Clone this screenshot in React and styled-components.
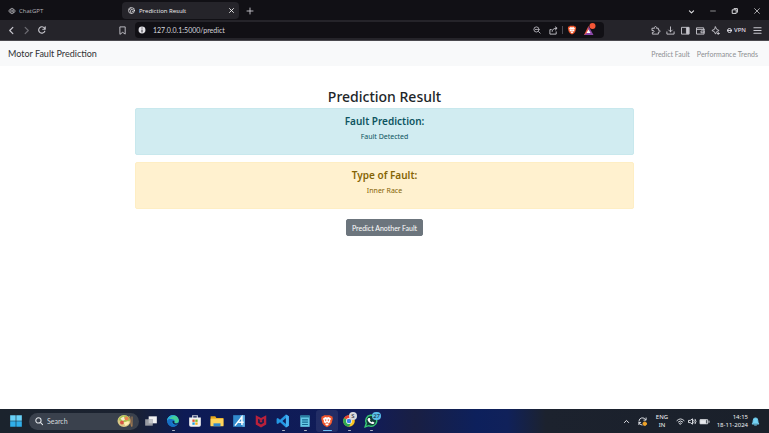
import React from "react";
import styled, { createGlobalStyle } from "styled-components";

const Global = createGlobalStyle`
  *, *::before, *::after { box-sizing: border-box; }
  body { margin: 0; background: #fff; font-family: "Noto Sans", "Open Sans", sans-serif; color: #212529; }
  button, input { font-family: inherit; }
  svg { display: block; flex: none; overflow: visible; }
`;

const Screen = styled.div`
  min-height: 100vh;
  display: flex;
  flex-direction: column;
`;

const TabStrip = styled.div`
  height: 20px;
  display: flex;
  align-items: stretch;
  background: #111015;
  padding: 2px 1px 0 6px;
`;
const Tab = styled.div`
  display: flex;
  align-items: center;
  gap: 4px;
  width: ${(p) => (p.$active ? 117 : 116)}px;
  height: 17px;
  padding: 0 4px 0 ${(p) => (p.$active ? 6 : 3)}px;
  border-radius: 4px;
  background: ${(p) => (p.$active ? "#25242a" : "transparent")};
  color: ${(p) => (p.$active ? "#f1f1f3" : "#b4b3b9")};
`;
const TabName = styled.span`
  flex: 1;
  font-family: "Open Sans", sans-serif;
  font-size: 6px;
  line-height: 10px;
  white-space: nowrap;
`;
const IconButton = styled.button`
  display: flex;
  align-items: center;
  justify-content: center;
  flex: none;
  width: ${(p) => p.$w || 15}px;
  border: 0;
  padding: 0;
  background: none;
  color: ${(p) => p.$color || "#c9c8cf"};
`;
const Spacer = styled.div`
  flex: 1;
`;

const Toolbar = styled.div`
  height: 21px;
  display: flex;
  align-items: center;
  background: #25242a;
  border-bottom: 1px solid #4a494e;
  padding: 0 4px;
`;
const NavGroup = styled.div`
  display: flex;
  width: 113px;
`;
const AddressBar = styled.div`
  flex: 1;
  display: flex;
  align-items: center;
  height: 16px;
  margin: 0 44px 0 8px;
  padding: 0 5px 0 3px;
  border-radius: 4px;
  background: #111015;
  color: #c9c8cf;
`;
const AddressInput = styled.input`
  flex: 1;
  min-width: 0;
  border: 0;
  padding: 0 0 0 7px;
  outline: 0;
  background: none;
  color: #d6d5dc;
  font-family: Lato, sans-serif;
  font-size: 7px;
  line-height: 12px;
`;
const Divider = styled.span`
  width: 1px;
  height: 8px;
  background: #4b4a52;
`;
const Vpn = styled.button`
  display: flex;
  align-items: center;
  justify-content: center;
  gap: 2px;
  width: 27px;
  border: 0;
  padding: 0;
  background: none;
  color: #e0dfe6;
  font-size: 6px;
  line-height: 10px;
  font-weight: 500;
`;

const Navbar = styled.nav`
  display: flex;
  align-items: center;
  justify-content: space-between;
  height: 25px;
  padding: 0 11px 0 8px;
  background: #f8f9fa;
`;
const Brand = styled.a`
  color: #303235;
  font-family: Lato, sans-serif;
  font-size: 9px;
  line-height: 14px;
  text-decoration: none;
`;
const NavLinks = styled.div`
  display: flex;
  gap: 7px;
`;
const NavLink = styled.a`
  color: #8d8f92;
  font-family: Lato, sans-serif;
  font-size: 7px;
  line-height: 12px;
  text-decoration: none;
`;

const Main = styled.main`
  flex: 1;
  width: 65%;
  margin: 0 auto;
  padding-top: 20px;
  display: flex;
  flex-direction: column;
  align-items: center;
  text-align: center;
`;
const Title = styled.h1`
  margin: 0 0 1px;
  font-size: 14px;
  line-height: 21px;
  font-weight: 500;
`;
const Alert = styled.section`
  width: 100%;
  height: 47px;
  margin-bottom: 7px;
  padding-top: 5px;
  border: 1px solid ${(p) => (p.$kind === "info" ? "#c8e8ed" : "#feeec4")};
  border-radius: 2px;
  background: ${(p) => (p.$kind === "info" ? "#d1ecf1" : "#fff1cf")};
  color: ${(p) => (p.$kind === "info" ? "#0c5460" : "#856404")};
`;
const AlertTitle = styled.h2`
  margin: 0 0 3px;
  font-size: 10px;
  line-height: 14px;
  font-weight: 600;
`;
const AlertText = styled.p`
  margin: 0;
  font-size: 7px;
  line-height: 11px;
`;
const Action = styled.button`
  height: 17px;
  margin-top: 3px;
  padding: 0 5px;
  border: 1px solid #6c757d;
  border-radius: 2px;
  background: #6c757d;
  color: #fff;
  font-family: Lato, sans-serif;
  font-size: 7px;
  line-height: 12px;
`;

const Taskbar = styled.footer`
  display: flex;
  align-items: center;
  height: 24px;
  padding: 0 6px 0 4px;
  background: linear-gradient(90deg, #1b232d 0%, #1b2231 17%, #0d1b55 24%, #111c59 48%, #191f43 54%, #0d205c 62%, #10215a 66%, #1c222e 71%, #1a202a 100%);
`;
const SearchBox = styled.label`
  display: flex;
  align-items: center;
  width: 110px;
  height: 17px;
  margin: 0 1px;
  padding: 0 5px 0 6px;
  border-radius: 9px;
  background: #3a414d;
  color: #e3e6ea;
`;
const SearchInput = styled.input`
  flex: 1;
  min-width: 0;
  border: 0;
  outline: 0;
  padding: 0 0 0 4px;
  background: none;
  color: #e3e6ea;
  font-family: Lato, sans-serif;
  font-size: 7px;
  line-height: 12px;
  &::placeholder { color: #d5d8dd; opacity: 1; }
`;
const AppButton = styled.button`
  display: flex;
  align-items: center;
  justify-content: center;
  position: relative;
  flex: none;
  width: ${(p) => p.$w || 22}px;
  height: 22px;
  padding: 0;
  border: 0;
  border-radius: 3px;
  background: ${(p) => (p.$state === "active" ? "#ffffff14" : "none")};
  &::after {
    content: "";
    position: absolute;
    bottom: 1px;
    height: 1px;
    border-radius: 1px;
    width: ${(p) => (p.$state === "active" ? 9 : p.$state === "open" ? 3 : 0)}px;
    background: ${(p) => (p.$state === "active" ? "#6ec0f5" : "#aeb3c4")};
  }
`;
const Badge = styled.span`
  position: absolute;
  top: 2px;
  right: ${(p) => (p.$blue ? 1 : 3)}px;
  min-width: 8px;
  height: 8px;
  padding: 0 1px;
  border-radius: 4px;
  background: ${(p) => (p.$blue ? "#58bdea" : "#d8d9dc")};
  color: #17202e;
  font-size: 6px;
  line-height: 8px;
`;
const TrayText = styled.div`
  width: ${(p) => p.$w}px;
  color: #f0f1f4;
  font-size: 6px;
  line-height: 8px;
  white-space: nowrap;
  text-align: ${(p) => p.$align};
`;

const Line = ({ size = 9, sw = 1, box = 10, children }) => (
  <svg width={size} height={size} viewBox={`0 0 ${box} ${box}`} fill="none" stroke="currentColor" strokeWidth={sw} strokeLinecap="round" strokeLinejoin="round" aria-hidden="true">
    {children}
  </svg>
);
const Art = ({ w = 14, children }) => (
  <svg width={w} height={w} viewBox="0 0 24 24" aria-hidden="true">{children}</svg>
);

const windowControls = [
  ["Search tabs", 21, <Line size={7} sw={1.6}><path d="M2 4l3 3 3-3" /></Line>],
  ["Minimize", 21, <Line size={6}><path d="M1 5h8" /></Line>],
  ["Restore", 23, <Line size={6} sw={1.6}><path d="M1 3h6v6H1zM3.500 1H9v6" /></Line>],
  ["Close window", 22, <Line size={6} sw={1.2}><path d="M1 1l8 8M9 1L1 9" /></Line>],
];

const extensionButtons = [
  ["Extensions", <Line><path d="M1.500 2.500H4a1.200 1.200 0 1 1 2 0h2.200v2.200a1.200 1.200 0 1 1 0 2V9H1.500V7a1.200 1.200 0 1 0 0-2z" /></Line>],
  ["Downloads", <Line><path d="M5 1v5.500M3 4.500l2 2 2-2M1 6.500V9h8V6.500" /></Line>],
  ["Sidebar", <Line><path d="M1 1.500h8v7.500H1z" /><path d="M6.500 2h2v6.500h-2z" fill="currentColor" /></Line>],
  ["Wallet", <Line><path d="M1 2h7.500v1.500H9V9H1zM1 3.800h8M6 5.500h3v2H6z" /></Line>],
  ["Leo AI", <Line><path d="M5 1l1.300 2.700L9 5 6.300 6.300 5 9 3.700 6.300 1 5l2.700-1.300zM8 7v2.500M7 8.300h2.400" /></Line>],
];

const BraveLion = ({ w }) => (
  <Art w={w}>
    <path d="M7 2h10l2 2 2-.3 1 4-2 8-3 4-5 3-5-3-3-4-2-8 1-4L5 4z" fill="#f1562b" />
    <path d="M12 6l3-1 4 3-2 4 1 2-4 2 1 2-3 2-3-2 1-2-4-2 1-2-2-4 4-3z" fill="#fff" />
    <path d="M8 9l3 1-1 3zM16 9l-3 1 1 3zM12 14l2 1-2 2-2-2z" fill="#f1562b" />
  </Art>
);

const apps = [
  ["Task view", "", <Art><path d="M8 4h14v12H8z" fill="#f2f2f2" /><path d="M2 9h13v11H2z" fill="#989ba2" /><path d="M8 9h7v7H8z" fill="#c2c4c8" /></Art>],
  ["Edge", "open", <Art><circle cx="12" cy="12" r="10" fill="#1687d3" /><path d="M2 12C2 0 20-1 22 10c1 6-6 7-8 5 2-2 1-6-3-6-4-1-8 1-9 3z" fill="#42ce9b" /><path d="M2 12C2 3 12 0 18 4c-6-2-12 2-12 6z" fill="#2aa9e0" /><path d="M2 11c3-4 9-3 10 0-5 2-3 9 7 8-3 3-7 4-11 2-4-2-6-5-6-10z" fill="#1770c6" /><path d="M12 11c-2 2-1 6 3 7 3 1 6-1 6-3-3 2-6 1-7 0 1-1 1-3-2-4z" fill="#10224e" /></Art>],
  ["Store", "", <Art><path d="M8 7V3h8v4" fill="none" stroke="#d0d5dc" strokeWidth="2" /><path d="M2 6h20v13q0 3-3 3H5q-3 0-3-3z" fill="#f3f3f1" /><path d="M7.500 9.500h4v4h-4z" fill="#e3532d" /><path d="M12.500 9.500h4v4h-4z" fill="#79b82a" /><path d="M7.500 14.500h4v4h-4z" fill="#20a0df" /><path d="M12.500 14.500h4v4h-4z" fill="#f7b51b" /></Art>],
  ["File Explorer", "", <Art><path d="M1 4h8l2 3h12v13H1z" fill="#e6a61c" /><path d="M1 8h22v13H1z" fill="#ffd45c" /><path d="M6 16h12v5H6z" fill="#2f87cf" /></Art>],
  ["Design tool", "", <Art><path d="M2 2h20v20H2z" fill="#3189cd" /><path d="M14 2h8v20h-4z" fill="#62afe2" /><path d="M5 20L17 5v14M11 14h9" fill="none" stroke="#fff" strokeWidth="2.500" /></Art>],
  ["McAfee", "", <Art><path d="M3 2l9 5 9-5v16l-9 5-9-5z" fill="#b9213b" /><path d="M7 8l5 3 5-3v7l-5 3-5-3z" fill="#182052" /><path d="M10 10l2 1 2-1v4h-4z" fill="#b9213b" /></Art>],
  ["Visual Studio Code", "open", <Art><path d="M17 1l5 3v16l-5 3L7 14l-4 3-2-1V8l2-1 4 3zM17 7l-6 5 6 5z" fill="#2497e3" fillRule="evenodd" /><path d="M17 1l5 3v16l-5 3z" fill="#45aef0" /></Art>],
  ["Notepad", "open", <Art><path d="M4 3h16v19H4z" fill="#65c9e6" /><path d="M4 2h16v4H4z" fill="#297c9f" /><path d="M7 10h10M7 14h10M7 18h10" stroke="#176990" strokeWidth="2" /></Art>],
  ["Brave", "active", <BraveLion w={14} />],
  ["Chrome", "open", <><Art><circle cx="12" cy="12" r="10" fill="#f9c525" /><path d="M12 12L3.300 7a10 10 0 0 1 17.400 0z" fill="#e64235" /><path d="M3.300 7A10 10 0 0 0 12 22l4-8-4-2z" fill="#2faa52" /><circle cx="12" cy="12" r="5" fill="#fff" /><circle cx="12" cy="12" r="4" fill="#3b7fe8" /></Art><Badge>S</Badge></>],
  ["WhatsApp", "open", <><Art><path d="M2 22l2-6a9.500 9.500 0 1 1 4 4z" fill="#113d39" stroke="#38c776" strokeWidth="2.500" /><path d="M8 7l2 0 1 3-1 1q1 2 3 3l2-1 3 2q-1 3-4 2-6-1-8-7 0-2 2-3z" fill="#fff" /></Art><Badge $blue>27</Badge></>],
];

export default function App() {
  return (
    <Screen>
      <Global />
      <TabStrip>
        <Tab>
          <Line size={6}><circle cx="5" cy="5" r="1.500" /><path d="M5 1a2 2 0 0 1 3 2v4M8.500 3a2 2 0 0 1 0 4L5 9M8 7a2 2 0 0 1-3 2L2 7M5 9a2 2 0 0 1-3-2V3M1.500 7a2 2 0 0 1 0-4L5 1M2 3a2 2 0 0 1 3-2l3 2" /></Line>
          <TabName>ChatGPT</TabName>
        </Tab>
        <Tab $active>
          <Line size={7}><circle cx="5" cy="5" r="4.300" /><path d="M1.500 3.500L4 5l-.5 2L5 9M4 1.500l.5 2 2 .5L8 2.500M6 6.500l2.500-1" /></Line>
          <TabName>Prediction Result</TabName>
          <IconButton $w={8} $color="#eee" aria-label="Close tab"><Line size={5} sw={1.8}><path d="M1 1l8 8M9 1L1 9" /></Line></IconButton>
        </Tab>
        <IconButton $w={21} aria-label="New tab"><Line size={6} sw={1.5}><path d="M5 0v10M0 5h10" /></Line></IconButton>
        <Spacer />
        {windowControls.map(([label, w, icon]) => (
          <IconButton key={label} $w={w} $color="#e0e0e3" aria-label={label}>{icon}</IconButton>
        ))}
      </TabStrip>

      <Toolbar>
        <NavGroup>
          <IconButton aria-label="Back"><Line sw={1.3}><path d="M6.500 1.500L3 5l3.500 3.500" /></Line></IconButton>
          <IconButton $color="#6d6c73" aria-label="Forward"><Line sw={1.3}><path d="M3.500 1.500L7 5 3.500 8.500" /></Line></IconButton>
          <IconButton aria-label="Reload"><Line size={8} sw={1.4}><path d="M8.500 6.500A4 4 0 1 1 8 2.500L9 4M9 1v3H6" /></Line></IconButton>
        </NavGroup>
        <IconButton $w={10} aria-label="Bookmark"><Line><path d="M2.500 1h5.500v8L5.200 7 2.500 9z" /></Line></IconButton>
        <AddressBar>
          <svg width="8" height="8" viewBox="0 0 10 10" aria-hidden="true"><circle cx="5" cy="5" r="4.300" fill="#e4e3e8" /><path d="M5 2v1.200M5 4.500V8" stroke="#222128" strokeWidth="1.200" /></svg>
          <AddressInput aria-label="Address" defaultValue="127.0.0.1:5000/predict" />
          <IconButton $w={17} aria-label="Zoom"><Line size={8}><circle cx="4.300" cy="4.300" r="3.200" /><path d="M7 7l2 2M3 4.300h2.600" /></Line></IconButton>
          <IconButton $w={17} aria-label="Share"><Line><path d="M2.500 4H1v5h7V6.500M3.500 6q0-3.500 5-3.500M7 1l2 1.500L7 4.500" /></Line></IconButton>
          <Divider />
          <IconButton $w={18} aria-label="Shields"><BraveLion w={10} /></IconButton>
          <IconButton $w={18} aria-label="Rewards">
            <Art w={12}><path d="M9 4L0 22h11z" fill="#ef5a45" /><path d="M9 4l10 18H0l9-6z" fill="#8b47a8" /><path d="M9 11l4 7H5z" fill="#fff" /><circle cx="17" cy="4" r="6" fill="#f45636" /></Art>
          </IconButton>
        </AddressBar>
        {extensionButtons.map(([label, icon]) => <IconButton key={label} aria-label={label}>{icon}</IconButton>)}
        <Vpn><Line size={5} sw={1.8}><circle cx="5" cy="5" r="4" /><path d="M1 5h8" /></Line>VPN</Vpn>
        <IconButton aria-label="Menu"><Line sw={1.2}><path d="M1 2h8M1 5h8M1 8h8" /></Line></IconButton>
      </Toolbar>

      <Navbar>
        <Brand href="#home">Motor Fault Prediction</Brand>
        <NavLinks>
          <NavLink href="#predict">Predict Fault</NavLink>
          <NavLink href="#trends">Performance Trends</NavLink>
        </NavLinks>
      </Navbar>

      <Main>
        <Title>Prediction Result</Title>
        <Alert $kind="info">
          <AlertTitle>Fault Prediction:</AlertTitle>
          <AlertText>Fault Detected</AlertText>
        </Alert>
        <Alert $kind="warning">
          <AlertTitle>Type of Fault:</AlertTitle>
          <AlertText>Inner Race</AlertText>
        </Alert>
        <Action>Predict Another Fault</Action>
      </Main>

      <Taskbar>
        <AppButton $w={24} aria-label="Start">
          <Art><path d="M2 2h9.500v9.500H2zM12.500 2H22v9.500h-9.500z" fill="#68d1f7" /><path d="M2 12.500h9.500V22H2zM12.500 12.500H22V22h-9.500z" fill="#30aee9" /></Art>
        </AppButton>
        <SearchBox>
          <Line size={8} sw={1.3}><circle cx="4.300" cy="4.300" r="3.300" /><path d="M7 7l2.500 2.500" /></Line>
          <SearchInput aria-label="Search" placeholder="Search" />
          <svg width="17" height="14" viewBox="0 0 34 28" aria-hidden="true">
            <ellipse cx="14" cy="14" rx="13" ry="12" fill="#dac888" />
            <path d="M3 12q3-10 12-9 9 0 11 10l-9 6z" fill="#a9c650" />
            <path d="M7 9l6-4 4 6-6 3z" fill="#f5edc9" /><circle cx="19" cy="9" r="4" fill="#e98550" />
            <circle cx="10" cy="17" r="4" fill="#d85745" /><path d="M13 17l10-3 1 5-7 5z" fill="#fff0b0" />
            <path d="M25 4l4 21M30 5v20" stroke="#b18352" strokeWidth="2" />
          </svg>
        </SearchBox>
        {apps.map(([label, state, icon]) => (
          <AppButton key={label} $state={state} aria-label={label}>{icon}</AppButton>
        ))}
        <Spacer />
        <IconButton $color="#e8eaee" aria-label="Hidden icons"><Line size={7} sw={1.4}><path d="M2 6.500l3-3 3 3" /></Line></IconButton>
        <IconButton $w={17} $color="#e8eaee" aria-label="Sync"><Line><path d="M1 4.500A4 4 0 0 1 8.500 3M9 1v2.500H6.500M1 6a4 4 0 0 0 3.500 3M1 8.500V6h2" /><circle cx="7.500" cy="7.500" r="2" fill="#f0a52a" stroke="#f0a52a" /></Line></IconButton>
        <TrayText $w={22} $align="center">ENG<br />IN</TrayText>
        <IconButton $w={14} $color="#e8eaee" aria-label="Wi-Fi"><Line><path d="M1 4q4-4 8 0M2.500 5.500q2.500-2.500 5 0M4 7q1-1 2 0L5 8z" /></Line></IconButton>
        <IconButton $w={11} $color="#e8eaee" aria-label="Volume"><Line><path d="M1 3.800h1.500L5 2v6L2.500 6.200H1zM6.500 3.500q1 1.500 0 3M8 2.500q2 2.500 0 5" /></Line></IconButton>
        <IconButton $w={12} $color="#e8eaee" aria-label="Battery"><Line><path d="M0.500 3h8v4.500h-8zM10 4.500V6" /><path d="M1 3.500h5.500V7H1z" fill="currentColor" /></Line></IconButton>
        <TrayText $w={38} $align="right">14:15<br />18-11-2024</TrayText>
        <IconButton $color="#74d3f5" aria-label="Notifications"><Line><path d="M1.500 7.500Q2.500 6 2.500 3.500q0-2.500 2.500-2.500t2.500 2.500Q7.500 6 8.500 7.500zM4 9h2" fill="currentColor" /></Line></IconButton>
      </Taskbar>
    </Screen>
  );
}
